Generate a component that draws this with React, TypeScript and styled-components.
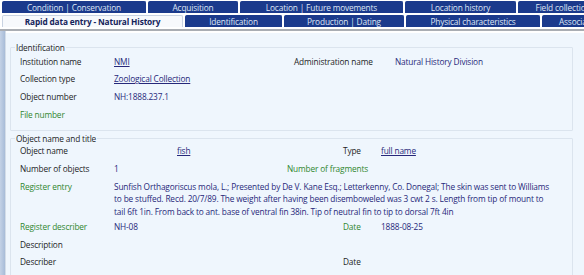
import React from "react";
import styled, { createGlobalStyle } from "styled-components";

const Global = createGlobalStyle`
  html, body { margin: 0; padding: 0; background: #ffffff; }
  body { font-family: "Open Sans", "Noto Sans", sans-serif; font-size: 8.3px; letter-spacing: -0.15px; overflow: hidden; }
  * { box-sizing: border-box; }
`;

const Page = styled.div`
  width: 584px;
  height: 275px;
  overflow: hidden;
  display: flex;
  flex-direction: column;
  background: #ffffff;
`;

const TabRow = styled.div<{ $top: number }>`
  display: flex;
  gap: 2px;
  padding-left: 2px;
  margin-top: ${(p) => p.$top}px;
  height: 15px;
  white-space: nowrap;
`;

const Tab = styled.div<{ $w: number; $active?: boolean }>`
  flex: 0 0 ${(p) => p.$w}px;
  display: flex;
  align-items: center;
  justify-content: center;
  border-radius: 2px 2px 0 0;
  background: ${(p) => (p.$active ? "#f7f9fc" : "#1b3a8c")};
  color: ${(p) => (p.$active ? "#14235a" : "#dfe6f5")};
  font-weight: ${(p) => (p.$active ? 700 : 400)};
  font-size: 8.3px;
  letter-spacing: -0.15px;
  border: 1px solid ${(p) => (p.$active ? "#c9d3e2" : "#1b3a8c")};
  border-bottom: none;
  overflow: hidden;
`;

const Body = styled.div`
  flex: 1;
  display: flex;
  margin-top: 2px;
  border-top: 2px solid #a9adb3;
`;

const SideStrip = styled.div`
  width: 6px;
  background: linear-gradient(to right, #c4d2e6, #a8bcd8);
  border-right: 1px solid #d4dde8;
`;

const Content = styled.div`
  flex: 1;
  background: #eff6fd;
  border-top: 2px solid #ffffff;
  padding: 9px 11px 0 4px;
  display: flex;
  flex-direction: column;
  gap: 2px;
`;

const Group = styled.fieldset`
  margin: 0;
  padding: 0 0 6px 9px;
  border: 1px solid #dbe4ee;
  border-radius: 1px;
  color: #1d1d1d;
`;

const Legend = styled.legend`
  padding: 0 1px;
  margin-left: -5px;
  line-height: 11px;
  color: #1d1d1d;
`;

const Grid = styled.div<{ $cols: string; $top: number }>`
  display: grid;
  grid-template-columns: ${(p) => p.$cols};
  align-items: start;
  margin-top: ${(p) => p.$top}px;
`;

const Cell = styled.div<{ $col?: string; $kind?: "label" | "green" | "value" | "link" }>`
  grid-column: ${(p) => p.$col || "auto"};
  padding: 2.6px 0 2.6px;
  line-height: 12.5px;
  white-space: nowrap;
  color: ${(p) =>
    p.$kind === "green" ? "#2f862f" : p.$kind === "value" || p.$kind === "link" ? "#27287a" : "#1d1d1d"};
  text-decoration: ${(p) => (p.$kind === "link" ? "underline" : "none")};
`;

const LongText = styled.div<{ $col: string }>`
  grid-column: ${(p) => p.$col};
  padding: 2.6px 22px 0 0;
  line-height: 12.5px;
  color: #27287a;
`;

const Blank = styled.div<{ $col: string }>`
  grid-column: ${(p) => p.$col};
  height: 17.7px;
`;

const row1 = [
  { t: "Condition | Conservation", w: 144 },
  { t: "Acquisition", w: 90 },
  { t: "Location | Future movements", w: 163 },
  { t: "Location history", w: 111 },
  { t: "Field collection", w: 90 },
];
const row2 = [
  { t: "Rapid data entry - Natural History", w: 181, active: true },
  { t: "Identification", w: 97 },
  { t: "Production | Dating", w: 120 },
  { t: "Physical characteristics", w: 134 },
  { t: "Associations", w: 80 },
];

const C1 = "94px 180px 101px 1fr";
const C2 = "94px 63px 110px 56px 38px 1fr";

export default function App() {
  return (
    <Page>
      <Global />
      <TabRow $top={1}>
        {row1.map((t) => (
          <Tab key={t.t} $w={t.w}>{t.t}</Tab>
        ))}
      </TabRow>
      <TabRow $top={2}>
        {row2.map((t) => (
          <Tab key={t.t} $w={t.w} $active={t.active}>{t.t}</Tab>
        ))}
      </TabRow>
      <Body>
        <SideStrip />
        <Content>
          <Group>
            <Legend>Identification</Legend>
            <Grid $cols={C1} $top={0}>
              <Cell $col="1">Institution name</Cell>
              <Cell $col="2" $kind="link">NMI</Cell>
              <Cell $col="3">Administration name</Cell>
              <Cell $col="4" $kind="value">Natural History Division</Cell>
              <Cell $col="1">Collection type</Cell>
              <Cell $col="2 / 4" $kind="link">Zoological Collection</Cell>
              <Cell $col="1">Object number</Cell>
              <Cell $col="2" $kind="value">NH:1888.237.1</Cell>
              <Cell $col="1" $kind="green">File number</Cell>
            </Grid>
          </Group>
          <Group>
            <Legend>Object name and title</Legend>
            <Grid $cols={C2} $top={-1}>
              <Cell $col="1">Object name</Cell>
              <Cell $col="3" $kind="link">fish</Cell>
              <Cell $col="5">Type</Cell>
              <Cell $col="6" $kind="link">full name</Cell>

              <Cell $col="1">Number of objects</Cell>
              <Cell $col="2" $kind="value">1</Cell>
              <Cell $col="4 / 6" $kind="green">Number of fragments</Cell>

              <Cell $col="1" $kind="green">Register entry</Cell>
              <LongText $col="2 / -1">
                Sunfish Orthagoriscus mola, L.; Presented by De V. Kane Esq.; Letterkenny, Co. Donegal; The skin was sent to Williams to be stuffed. Recd. 20/7/89. The weight after having been disemboweled was 3 cwt 2 s. Length from tip of mount to tail 6ft 1in. From back to ant. base of ventral fin 38in. Tip of neutral fin to tip to dorsal 7ft 4in
              </LongText>

              <Cell $col="1" $kind="green">Register describer</Cell>
              <Cell $col="2" $kind="value">NH-08</Cell>
              <Cell $col="5" $kind="green">Date</Cell>
              <Cell $col="6" $kind="value">1888-08-25</Cell>

              <Cell $col="1">Description</Cell>
              <Blank $col="2" />

              <Cell $col="1">Describer</Cell>
              <Cell $col="5">Date</Cell>
            </Grid>
          </Group>
        </Content>
      </Body>
    </Page>
  );
}
